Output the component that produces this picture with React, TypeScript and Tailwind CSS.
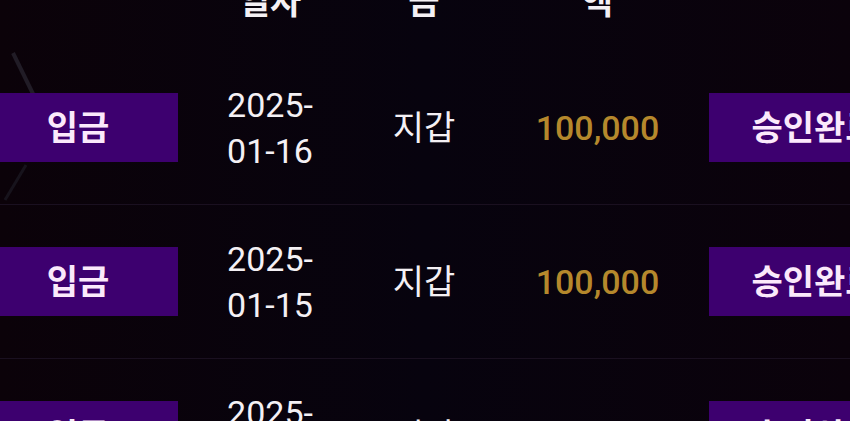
import React from "react";

const rows = [
  { date: ["2025-", "01-16"] },
  { date: ["2025-", "01-15"] },
  { date: ["2025-", "01-14"] },
];

const font = { fontFamily: "Roboto, 'Noto Sans CJK KR', sans-serif" };

function Row({ date }: { date: string[] }) {
  return (
    <div className="grid grid-cols-[220px_164px_144px_203px_230px] h-[154px] items-center border-b border-[#1a1020]">
      <div className="flex justify-center px-[10px]">
        <div className="w-[200px] h-[69px] bg-[#3d006f] flex items-center justify-center text-[34px] font-bold text-[#fbe9fb] leading-none">
          입금
        </div>
      </div>
      <div className="text-center text-[34px] leading-[46px] text-[#f4f0f4]">
        {date[0]}
        <br />
        {date[1]}
      </div>
      <div className="text-center text-[34px] leading-[46px] text-[#f4f0f4]">지갑</div>
      <div className="text-center text-[34px] leading-[46px] font-medium text-[#b5882c]">100,000</div>
      <div className="flex justify-start px-[10px]">
        <div className="w-[210px] h-[69px] bg-[#3d006f] flex items-center justify-center text-[34px] font-bold text-[#fbe9fb] leading-none whitespace-nowrap">
          승인완료
        </div>
      </div>
    </div>
  );
}

export default function App() {
  return (
    <div
      className="relative w-[850px] h-[421px] overflow-hidden bg-gradient-to-r from-[#0b0209] via-[#07030e] to-[#0b020b]"
      style={font}
    >
      <svg className="absolute left-0 top-0" width="60" height="220" viewBox="0 0 60 220">
        <path d="M13 53 L36 100" stroke="#211c26" strokeWidth="4" fill="none" />
        <path d="M26 165 L5 200" stroke="#17131c" strokeWidth="3" fill="none" />
      </svg>
      <div className="relative ml-[-32px] w-[961px]">
        <div className="grid grid-cols-[220px_164px_144px_203px_230px] h-[51px] items-start text-[34px] leading-[46px] font-bold text-[#f4f0f4]">
          <div></div>
          <div className="text-center mt-[-21px]">일자</div>
          <div className="text-center mt-[-21px]">금</div>
          <div className="text-center mt-[-21px]">액</div>
          <div></div>
        </div>
        {rows.map((r, i) => (
          <Row key={i} date={r.date} />
        ))}
      </div>
    </div>
  );
}
